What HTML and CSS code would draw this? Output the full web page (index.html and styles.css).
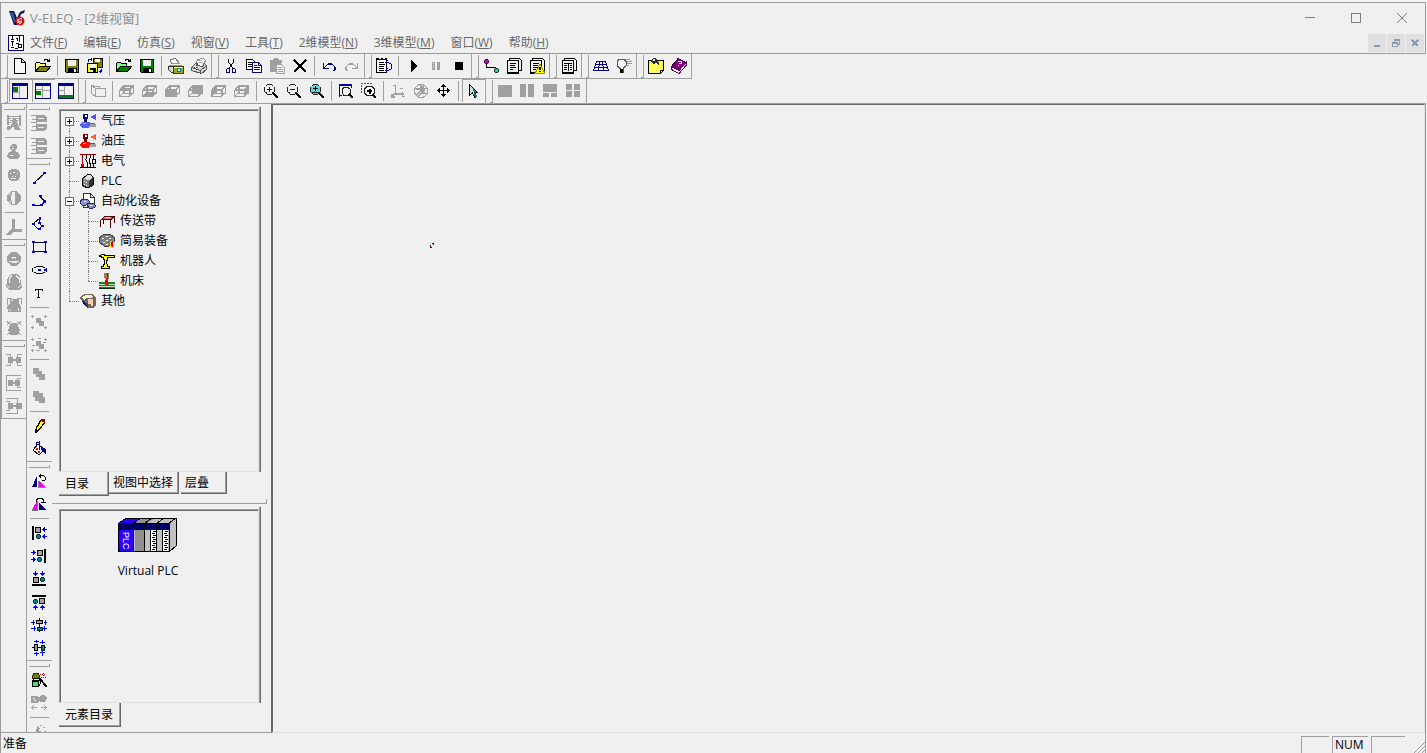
FILE: index.html
```html
<!DOCTYPE html>
<html lang="zh-CN">
<head>
<meta charset="utf-8">
<title>V-ELEQ - [2维视窗]</title>
<link rel="stylesheet" href="styles.css">
</head>
<body>
<svg class="defs" aria-hidden="true">
  <symbol id="logo" viewBox="0 0 16 16"><path d="M0 1h5l3 7 3-6 5-2-1 3-3 1-4 11H5z" fill="#101050"/><path d="M1 3l3-1 3 10H5z" fill="#315a9a"/><circle cx="11" cy="11" r="4.500" fill="#c81818"/><path d="M9 10l4-2M9 12l4-1M10 14l3-2M9 9v4" stroke="#fff" fill="none"/></symbol>
  <symbol id="doc" viewBox="0 0 16 16"><path d="M.5.5h15v15H.5z" fill="#fff" stroke="#000080"/><path d="M4.500 1v3M3 4.500h3M3 6.500h3M4.500 7v4M3 12.500h3M8 3.500h2M9.500 3v3M11.500 1v6M10 9.500h3v3h-3zM8 8.500h3M7 13.500h3" stroke="#000" fill="none"/></symbol>
  <symbol id="new" viewBox="0 0 16 16"><path d="M2.500.5h7l4 4v11h-11zM9.500.5v4h4" fill="#f8f8f8" stroke="#000"/></symbol>
  <symbol id="open" viewBox="0 0 16 16"><path d="M.5 13.500v-8l1-1h3l1 1h5v3" fill="#ffff70" stroke="#000"/><path d="M.5 13.500l4-5h11l-4 5z" fill="#808000" stroke="#000"/><path d="M9 2.500l1-1h2l2 2M14.500 1v3M12 3.500h3" fill="none" stroke="#000"/></symbol>
  <symbol id="openg" viewBox="0 0 16 16"><path d="M.5 13.500v-8l1-1h3l1 1h5v3" fill="#80ff80" stroke="#000"/><path d="M.5 13.500l4-5h11l-4 5z" fill="#008000" stroke="#000"/><path d="M9 2.500l1-1h2l2 2M14.500 1v3M12 3.500h3" fill="none" stroke="#000"/></symbol>
  <symbol id="save" viewBox="0 0 16 16"><path d="M1.500 1.500h13v13h-12l-1-1z" fill="#808000" stroke="#000"/><path d="M4 2h8v6H4z" fill="#f0f0f0"/><path d="M4 10h9v5H4z"/><path d="M10 11h2v3h-2z" fill="#f0f0f0"/></symbol>
  <symbol id="saveg" viewBox="0 0 16 16"><path d="M1.500 1.500h13v13h-12l-1-1z" fill="#008000" stroke="#000"/><path d="M4 2h8v6H4z" fill="#f0f0f0"/><path d="M4 10h9v5H4z"/><path d="M10 11h2v3h-2z" fill="#f0f0f0"/></symbol>
  <symbol id="saveall" viewBox="0 0 16 16"><path d="M6.500.5h9v9h-9z" fill="#808000" stroke="#000"/><path d="M8 1h5v3H8z" fill="#fff"/><path d="M.5 5.500h10v9H.5z" fill="#ffff00" stroke="#000"/><path d="M3 6h5v3H3zM4 12h2v2H4z" fill="#fff"/><path d="M3 10h6v4H6v-2H3z"/><path d="M1.500 4V1.500H5M4 0v3M14.500 11v2.500H12M13 12v3" stroke="#0000c0" fill="none"/></symbol>
  <symbol id="preview" viewBox="0 0 16 16"><path d="M3.500 6.500l-1-5 5-1 4 5" fill="#fff" stroke="#777"/><path d="M1 7.500h13M4 5.500h8" stroke="#00d0e0"/><path d="M.5 8.500h5v6h-2l-3-3z" fill="#dcdcdc" stroke="#333"/><path d="M5.500 8.500h10v7h-10z" fill="#a0a020" stroke="#404000"/><path d="M6 9.500h9" stroke="#ffff80"/><circle cx="11" cy="12" r="2" fill="#fff" stroke="#008080"/></symbol>
  <symbol id="print" viewBox="0 0 16 16"><path d="M4.500 7.500l2-6 6-1 2 2-3 6" fill="#fff" stroke="#888"/><path d="M.5 9.500l4-4h2l-1 2 6 1 2-3 2 2v4l-5 4-10-3z" fill="#d8d8d8" stroke="#555"/><path d="M.5 9.500l9 3 6-5M9.500 12.500v3" stroke="#555" fill="none"/><path d="M7 4.500h5M7 2.500h4" stroke="#b0b0b0"/><path d="M5 9h2v1H5z" fill="#00a000"/><path d="M3 9h1v1H3z" fill="#f00"/></symbol>
  <symbol id="cut" viewBox="0 0 16 16"><path d="M5.500 1v3l4 6M10.500 1v3l-4 6" stroke="#000" fill="none"/><path d="M4.500 10.500h2v4h-3v-3zM9.500 10.500h2l1 1v3h-3z" stroke="#000080" fill="none"/></symbol>
  <symbol id="copy" viewBox="0 0 16 16"><path d="M.5 1.500h6l3 3v7h-9z" fill="#fff" stroke="#000"/><path d="M2 4.500h4M2 6.500h4M2 8.500h4" stroke="#000"/><path d="M6.500 4.500h6l3 3v7h-9z" fill="#fff" stroke="#000080"/><path d="M12.500 4.500v3h3M8 7.500h3M8 9.500h6M8 11.500h6" stroke="#000080" fill="none"/></symbol>
  <symbol id="paste" viewBox="0 0 16 16"><path d="M1 2h3l1-2h4l1 2h3v3h-1v9H1z" fill="#a0a0a0"/><path d="M7.500 6.500h5l3 3v6h-8z" fill="#f0f0f0" stroke="#a0a0a0"/><path d="M9 9.500h4M9 11.500h5M9 13.500h5" stroke="#a0a0a0"/></symbol>
  <symbol id="del" viewBox="0 0 16 16"><path d="M2 2l12 12M14 2L2 14" stroke="#000" stroke-width="2.200"/></symbol>
  <symbol id="undo" viewBox="0 0 16 16"><path d="M2.500 5v5.500H8M3 10l4-4h4l3 3v3l-2 1" fill="none" stroke="#000080" stroke-width="1.300"/></symbol>
  <symbol id="redo" viewBox="0 0 16 16"><path d="M13.500 5v5.500H8M13 10L9 6H5L2 9v3l2 1" fill="none" stroke="#a0a0a0" stroke-width="1.300"/></symbol>
  <symbol id="rebuild" viewBox="0 0 16 16"><path d="M.5 1.500h10v13H.5z" fill="#fff" stroke="#000"/><path d="M0 .5h3M5 .5h2M9 .5h2M3 4.500h5M3 6.500h6M3 8.500h5M3 10.500h5M3 12.500h5" stroke="#000"/><path d="M9.500 4.500h3l3 2v4l-3 2h-3M11.500 2L9.500 4.500l2 2M11.500 10l-2 2.500 2 2" fill="none" stroke="#0000a0"/></symbol>
  <symbol id="play" viewBox="0 0 16 16"><path d="M6 2l7 6-7 6z"/></symbol>
  <symbol id="pause" viewBox="0 0 16 16"><path d="M4 4h3v8H4zM9 4h3v8H9z" fill="#a0a0a0"/><path d="M5.500 5v6" stroke="#f0f0f0" stroke-dasharray="1 1"/></symbol>
  <symbol id="stop" viewBox="0 0 16 16"><path d="M4 4h8v8H4z"/></symbol>
  <symbol id="wire" viewBox="0 0 16 16"><path d="M3.500 4v5.500h9v2" fill="none" stroke="#000"/><path d="M2 1h3v1h1v3H5v1H2V5H1V2h1z" fill="#500050"/><path d="M2 2h3v3H2z" fill="#c000c0"/><path d="M12 10h3v1h1v3h-1v1h-3v-1h-1v-3h1z" fill="#003838"/><path d="M12 11h3v3h-3z" fill="#00d8d8"/></symbol>
  <symbol id="list" viewBox="0 0 16 16"><path d="M3.500 2V.5h10l2 2v10H13" fill="none" stroke="#000"/><path d="M1.500 2.500h11v12h-11z" fill="#f0f0f0" stroke="#000"/><path d="M4 5.500h6M4 7.500h5M4 9.500h6M4 11.500h3M1 15.500h12" stroke="#000"/></symbol>
  <symbol id="warn" viewBox="0 0 16 16"><use href="#list"/><path d="M11 6l5 9.500H6z" fill="#ffff00" stroke="#a09000"/><path d="M10 9h2v3h-2zM10 13h2v1h-2z"/></symbol>
  <symbol id="table" viewBox="0 0 16 16"><path d="M3.500 2V.5h10l2 2v10H13" fill="none" stroke="#000"/><path d="M1.500 2.500h11v12h-11z" fill="#f0f0f0" stroke="#000"/><path d="M1 15.500h12M3 5.500h8M7.500 5v8M3 7.500h3M3 9.500h3M9 7.500h2M9 9.500h2M9 11.500h2M3 11.500h3" stroke="#000"/></symbol>
  <symbol id="grid" viewBox="0 0 16 16"><path d="M3.500 3.500h9l3 9H.5zM2.500 6.500h11M1.500 9.500h13M6.500 3.500l-1 9M9.500 3.500l1 9" fill="none" stroke="#000080"/></symbol>
  <symbol id="lamp" viewBox="0 0 16 16"><path d="M3 1.500h5l2 2v4l-3 3v4H4v-4l-3-3v-4z" fill="#f4f4f4" stroke="#555"/><path d="M4 11h3v4H4z"/><path d="M9 1.500h5M11 3.500h5M11 5.500h5M9 7.500h4" stroke="#00d0e0"/></symbol>
  <symbol id="note" viewBox="0 0 16 16"><path d="M.5 2.500h15v10l-3 3H.5z" fill="#ffff50" stroke="#000"/><path d="M2 5.500h12M2 7.500h12M2 9.500h12M2 11.500h12M2 13.500h10" stroke="#fff" stroke-dasharray="1 1"/><path d="M12.500 15v-2.500h3" fill="#f0f0f0" stroke="#000"/><path d="M4 1l2-1 3 1v2l2 2v2L8 5 5 6 3 3z" fill="#333"/><path d="M5 1h2v2H5z" fill="#ddd"/></symbol>
  <symbol id="book" viewBox="0 0 16 16"><path d="M7 .5l8 4-7 8-7.500-4z" fill="#800080" stroke="#300030"/><path d="M.5 8.500l7.500 4 7-8v3l-7 8-7.500-4z" fill="#fff" stroke="#600060"/><path d="M7 3.500h3v2H8M7 7v1" stroke="#ff0" fill="none"/></symbol>

  <symbol id="lay1" viewBox="0 0 16 16"><path d="M0 0h16v3H0z" fill="#000090"/><path d="M.5.5h15v15H.5z" fill="none" stroke="#000080"/><path d="M1 4h5v5H1z" fill="#008000"/><path d="M7.500 3v12M1 9.500h6" stroke="#a0a0a0"/></symbol>
  <symbol id="lay2" viewBox="0 0 16 16"><path d="M0 0h16v3H0z" fill="#000090"/><path d="M.5.5h15v15H.5z" fill="none" stroke="#000080"/><path d="M1 8h5v4H1z" fill="#008000"/><path d="M7.500 3v12M1 6.500h6M8 7.500h7" stroke="#a0a0a0"/></symbol>
  <symbol id="lay3" viewBox="0 0 16 16"><path d="M0 0h16v3H0z" fill="#000090"/><path d="M.5.5h15v15H.5z" fill="none" stroke="#000080"/><path d="M1 12h14v3H1z" fill="#008000"/><path d="M6.500 3v9M1 7.500h5" stroke="#a0a0a0"/></symbol>
  <symbol id="sheets" viewBox="0 0 16 16"><path d="M5.500 5.500h10v8h-10zM5.500 13.500l-4-3v-8h2l1 1h5v2M5.500 5.500l-4-3" fill="none" stroke="#a0a0a0"/></symbol>
  <symbol id="cube" viewBox="0 0 16 16"><path d="M.5 7.500h10v6H.5zM.5 7.500l4-5h10l-4 5M14.500 2.500v7l-4 4M4.500 3v7h10M.5 13.500l4-4" fill="none" stroke="#a0a0a0"/><path d="M1 6.500h10M5 3.500h9M11.500 7v6M5.500 3v7" fill="none" stroke="#a0a0a0"/></symbol>
  <symbol id="c1" viewBox="0 0 16 16"><use href="#cube"/><path d="M1 7l4-5h10l-4 5z" fill="#a0a0a0"/><path d="M6 4.500h5" stroke="#f0f0f0"/></symbol>
  <symbol id="c2" viewBox="0 0 16 16"><use href="#cube"/><path d="M0 14l5-5h10l-4 5z" fill="#a0a0a0"/></symbol>
  <symbol id="c3" viewBox="0 0 16 16"><use href="#cube"/><path d="M0 6h12v8H0z" fill="#a0a0a0"/></symbol>
  <symbol id="c4" viewBox="0 0 16 16"><use href="#cube"/><path d="M4 2h11v8H4z" fill="#a0a0a0"/></symbol>
  <symbol id="c5" viewBox="0 0 16 16"><use href="#cube"/><path d="M0 7l5-5v8l-5 4z" fill="#a0a0a0"/></symbol>
  <symbol id="c6" viewBox="0 0 16 16"><use href="#cube"/><path d="M10 7l5-5v8l-5 4z" fill="#a0a0a0"/></symbol>
  <symbol id="ring" viewBox="0 0 16 16"><path d="M4.500 1.500h4M2.500 3.500l2-2M8.500 1.500l2 2M1.500 4v5M11.500 4v5M2.500 9l2 2.500h4l2-2.500" fill="none" stroke="#222"/><path d="M10 10l5 5" stroke="#000" stroke-width="2"/></symbol>
  <symbol id="zin" viewBox="0 0 16 16"><use href="#ring"/><path d="M4 6.500h5M6.500 4v5" stroke="#600000"/></symbol>
  <symbol id="zout" viewBox="0 0 16 16"><use href="#ring"/><path d="M4 6.500h5" stroke="#600000"/></symbol>
  <symbol id="zpm" viewBox="0 0 16 16"><path d="M3 2h7l1 2v5l-2 2H4L2 9V4z" fill="#60d8d8"/><use href="#ring"/><path d="M4 5.500h5M6.500 3v5M4 9.500h5" stroke="#000"/></symbol>
  <symbol id="zfit" viewBox="0 0 16 16"><path d="M1.500 14V1.500h12V4M1 12.500h3M2 2.500h11M13.500 2v3" stroke="#0000a0" fill="none"/><path d="M6 4.500h4l2.500 2v3.500l-2.500 2.500H6L4.500 10V6z" fill="#f8f8f8" stroke="#222"/><path d="M11 11l4 4" stroke="#000" stroke-width="2"/></symbol>
  <symbol id="zwin" viewBox="0 0 16 16"><path d="M.5 10V.5h10" stroke="#555" stroke-dasharray="2 1" fill="none"/><path d="M6 3.500h5l2.500 2.500v4L11 12.500H6L3.500 10V6z" fill="#f8f8f8" stroke="#222"/><path d="M6 8h5M8.500 5.500v5" stroke="#000" stroke-width="2"/><path d="M12 12l3 3" stroke="#000" stroke-width="2"/></symbol>
  <symbol id="axes" viewBox="0 0 16 16"><path d="M5.500 2v9h8M5.500 10L2 14M3 2.500h3M12.500 9v5M10 5.500h3M2 11v3h3M12 13.500h3" stroke="#a0a0a0" fill="none" stroke-width="1.400"/></symbol>
  <symbol id="orbit" viewBox="0 0 16 16"><circle cx="8" cy="8" r="6.500" fill="none" stroke="#a0a0a0" stroke-width="1.300"/><path d="M8 2v6l5 3M8 8l-5 4M3 6h9l-7 8M10 3v8" stroke="#a0a0a0" fill="none" stroke-width="1.300"/></symbol>
  <symbol id="move" viewBox="0 0 16 16"><path d="M7.500 3v10M3 7.500h10" stroke="#000"/><path d="M7 1h1v1h1v1h1v1H5V3h1V2h1zM7 14h1v-1h1v-1h1v-1H5v1h1v1h1zM1 7v1h1v1h1v1h1V5H3v1H2v1zM14 7v1h-1v1h-1v1h-1V5h1v1h1v1z"/></symbol>
  <symbol id="arrow" viewBox="0 0 16 16"><path d="M4.500 1.500v11l3-3 2 5 2-1-2-4h3z" fill="#c8e0e0" stroke="#000"/><path d="M8 7l3 2M9 11l3 3" stroke="#008080" stroke-width="1.500"/></symbol>
  <symbol id="v1" viewBox="0 0 16 16"><path d="M1 2h14v12H1z" fill="#a0a0a0"/></symbol>
  <symbol id="v2" viewBox="0 0 16 16"><path d="M0 1h6v13H0zM8 1h6v13H8z" fill="#a0a0a0"/></symbol>
  <symbol id="v3" viewBox="0 0 16 16"><path d="M0 1h14v8H0zM0 10h6v4H0zM8 10h6v4H8z" fill="#a0a0a0"/></symbol>
  <symbol id="v4" viewBox="0 0 16 16"><path d="M0 1h6v6H0zM8 1h6v6H8zM0 8h6v6H0zM8 8h6v6H8z" fill="#a0a0a0"/></symbol>

  <symbol id="s1" viewBox="0 0 16 16"><path d="M2 0v10M14 0v11" stroke="#a0a0a0" stroke-width="2"/><path d="M1 1.500h14" stroke="#a0a0a0"/><path d="M3 3.500h10M4 5.500h8M3 7.500h9" stroke="#a0a0a0" stroke-dasharray="2 1"/><path d="M7 3h3l2 7 3 5H9l-2-4-3 4H1v-4h4z" fill="#a0a0a0"/></symbol>
  <symbol id="s2" viewBox="0 0 16 16"><path d="M6 0h3l2 2v2l-2 3 4 2 1 3-3 3H4l-3-2 1-4 4-2-2-3V2z" fill="#a0a0a0"/><path d="M6 2.500h1M6 4.500h2M4 11.500h3" stroke="#eee"/></symbol>
  <symbol id="s3" viewBox="0 0 16 16"><circle cx="8" cy="8" r="6.500" fill="#a0a0a0"/><path d="M4 6.500h1M7 5.500h2M11 6.500h1M6 9.500h1M9 9.500h1M5 11.500h5" stroke="#eee"/></symbol>
  <symbol id="s4" viewBox="0 0 16 16"><circle cx="8" cy="8" r="6.500" fill="none" stroke="#a0a0a0"/><path d="M9 2h2l4 4v4l-4 4H9zM6 2L2 6v4l4 4z" fill="#a0a0a0"/><path d="M7.500 3v10M5.500 5v6" stroke="#eee" fill="none"/></symbol>
  <symbol id="s5" viewBox="0 0 16 16"><path d="M6 0h3v10h7v3H8l-4 3H0v-1l6-5z" fill="#a0a0a0"/></symbol>
  <symbol id="s6" viewBox="0 0 16 16"><circle cx="8" cy="8" r="7" fill="#a0a0a0"/><path d="M6 6.500h4M6 7.500h1M9 7.500h1M3 10.500h10M6 11.500h5" stroke="#eee"/></symbol>
  <symbol id="s7" viewBox="0 0 16 16"><path d="M5 0h6l3 3 2 10-2 3H3l-3-3L2 3z" fill="#a0a0a0"/><path d="M6 1.500L3.500 4v5M10 1.500L13.500 5v4M1.500 11l2 3M14.500 11l-2 3" stroke="#eee" fill="none"/></symbol>
  <symbol id="s8" viewBox="0 0 16 16"><path d="M4 2h9v4l2 4v5H2L1 9l3-3z" fill="#a0a0a0"/><path d="M1.500 8V1.500H6M15.500 7V1.500H11" stroke="#a0a0a0" fill="none"/><path d="M5 3.500h2M3 12l2 2M13 11l-1 3" stroke="#eee"/></symbol>
  <symbol id="s9" viewBox="0 0 16 16"><path d="M5 3h6l3 7-2 5H4l-2-5z" fill="#a0a0a0"/><path d="M1 1l14 14M15 1L1 15M1 5l4-4M11 1l4 4M1 2h3M12 2h3" stroke="#a0a0a0"/></symbol>
  <symbol id="j1" viewBox="0 0 16 16"><path d="M0 2.500h4.500v11H0M16 2.500h-4.500v11H16" fill="none" stroke="#a0a0a0"/><path d="M2 5h5v6H2zM10 5h5v6h-5z" fill="#a0a0a0"/><path d="M7 8h3" stroke="#a0a0a0" stroke-width="2"/></symbol>
  <symbol id="j2" viewBox="0 0 16 16"><path d="M15 .5H.5v15H15M15 3.500h-3.500v9H15" fill="none" stroke="#a0a0a0"/><path d="M2 5h5v6H2zM9 5h5v6H9z" fill="#a0a0a0"/><path d="M6 8h4" stroke="#a0a0a0" stroke-width="2"/></symbol>
  <symbol id="j3" viewBox="0 0 16 16"><path d="M0 .5h11.500v15H0M0 3.500h3.500v9H0" fill="none" stroke="#a0a0a0"/><path d="M2 5h5v6H2zM10 5h6v6h-6z" fill="#a0a0a0"/><path d="M7 8h3" stroke="#a0a0a0" stroke-width="2"/></symbol>
  <symbol id="m1" viewBox="0 0 16 16"><path d="M0 .5h8M0 15.500h8M.5 4.500h4M0 7.500h5M.5 11.500h4M5.500 0v16" stroke="#a0a0a0" fill="none"/><path d="M6 0h7l3 3v4H6zM6 9h10v4l-3 3H6z" fill="#a0a0a0"/><path d="M7 3.500h6M7 12.500h6" stroke="#eee"/></symbol>
  <symbol id="line" viewBox="0 0 16 16"><path d="M3 13L14 3" stroke="#000"/><path d="M2 12h3v2H2zM12 2h3v2h-3z" fill="#00e"/></symbol>
  <symbol id="poly" viewBox="0 0 16 16"><path d="M2 12.500h8l4-4-5-5" stroke="#000" fill="none"/><path d="M1 11h3v2H1zM9 11h3v2H9zM12 7h3v3h-3zM8 2h3v2H8z" fill="#00e"/></symbol>
  <symbol id="polygon" viewBox="0 0 16 16"><path d="M9 2L2 8l6 6 3-4-3-3z" stroke="#000" fill="none"/><path d="M8 1h2v3H8zM1 7h3v2H1zM7 6h3v2H7zM10 9h3v2h-3zM7 12h3v2H7z" fill="#00e"/></symbol>
  <symbol id="rect" viewBox="0 0 16 16"><path d="M2.500 3.500h12v9h-12z" fill="none" stroke="#000"/><path d="M1 2h3v2H1zM13 2h3v2h-3zM1 12h3v2H1zM13 12h3v2h-3z" fill="#00e"/></symbol>
  <symbol id="ell" viewBox="0 0 16 16"><path d="M5 4.500h7M3 5.500h2M12 5.500h2M1.500 6v4M15 6v4M3 10.500h2M12 10.500h2M5 11.500h7" fill="none" stroke="#000"/><path d="M7 7h3v2H7zM13 7h3v2h-3z" fill="#00e"/></symbol>
  <symbol id="text" viewBox="0 0 16 16"><path d="M4 4h8v2h-1V5H8v7h1v1H6v-1h1V5H5v1H4z"/></symbol>
  <symbol id="grp" viewBox="0 0 16 16"><path d="M5 4h5v3h3v5H8V9H5z" fill="#a0a0a0"/><path d="M0 2.500h3M1.500 1v3M13 2.500h3M14.500 1v3M0 13.500h3M1.500 12v3M13 13.500h3M14.500 12v3" stroke="#a0a0a0"/></symbol>
  <symbol id="ungrp" viewBox="0 0 16 16"><path d="M5 4h5v3h3v5H8V9H5z" fill="#a0a0a0"/><path d="M0 2.500h3M1.500 1v3M13 2.500h3M14.500 1v3M0 13.500h3M1.500 12v3M13 13.500h3M14.500 12v3M7 1.500h3M12 5.500h3M1 8.500h3M5 13.500h4" stroke="#a0a0a0"/></symbol>
  <symbol id="front" viewBox="0 0 16 16"><path d="M2 2h6v3h3v3h3v6H8v-3H5V8H2z" fill="#a0a0a0"/></symbol>
  <symbol id="back" viewBox="0 0 16 16"><path d="M2 2h6v2h4v4h2v6H8v-2H4V8H2z" fill="#a0a0a0"/></symbol>
  <symbol id="pen" viewBox="0 0 16 16"><path d="M4.500 14.500l1-5 5-8h3v3l-5 7z" fill="#ff0" stroke="#000" stroke-width="1.300"/><path d="M10 1h4v4l-4-2z" fill="#900000"/><path d="M4 16v-5l3 1z"/></symbol>
  <symbol id="fill" viewBox="0 0 16 16"><path d="M2 9l5-6 6 6-5 5z" fill="#fff" stroke="#000"/><path d="M5.500 6V2l3-1v8" fill="none" stroke="#000080"/><path d="M10 5l5 3v5h-1l-4-5z" fill="#000080"/><path d="M5 7h2v2H5zM7 10h2v2H7z" fill="#f00"/></symbol>
  <symbol id="rot1" viewBox="0 0 16 16"><path d="M1 14L6 3v11z" fill="#000080"/><path d="M8 14V8l7 6z" fill="#f000f0"/><path d="M7.500 8v6.500H15" stroke="#888" fill="none"/><path d="M8 4l1-2h3l2 2v3l-3 1M9 1v4" fill="none" stroke="#000"/></symbol>
  <symbol id="rot2" viewBox="0 0 16 16"><path d="M1 14L6 5v9z" fill="#f000f0"/><path d="M1 14.500h5.500V5" stroke="#777" fill="none"/><path d="M8 14V7l8 7z" fill="#000080"/><path d="M5.500 6V4l2-2h3l2 2v3M10 6.500h5" fill="none" stroke="#000"/></symbol>
  <symbol id="al1" viewBox="0 0 16 16"><path d="M1 1h2v14H1z"/><path d="M4.500 2.500h5v5h-5z" fill="#a0a0a0" stroke="#000"/><path d="M5 10h1V9h3v1h1v3H9v1H6v-1H5z" fill="#002828"/><path d="M6 10h3v3H6z" fill="#008080"/><path d="M11 4.500h5M13.500 2v5M11 11.500h5M13.500 9v5M12.500 3v3M12.500 10v3" stroke="#00f" fill="none"/></symbol>
  <symbol id="al2" viewBox="0 0 16 16"><use href="#al1" transform="matrix(-1 0 0 1 16 0)"/></symbol>
  <symbol id="al3" viewBox="0 0 16 16"><use href="#al1" transform="rotate(-90 8 8)"/></symbol>
  <symbol id="al4" viewBox="0 0 16 16"><use href="#al1" transform="rotate(90 8 8)"/></symbol>
  <symbol id="al5" viewBox="0 0 16 16"><path d="M8.500 1v14" stroke="#000"/><path d="M5.500 3.500h6v3h-6z" fill="#a0a0a0" stroke="#000"/><path d="M6 10h5v3H6z" fill="#008080" stroke="#002020"/><path d="M0 5.500h4M2.500 3v5M16 5.500h-3M14.500 3v5M0 11.500h5M3.500 9v5M16 11.500h-4M13.500 9v5" stroke="#00f" fill="none"/></symbol>
  <symbol id="al6" viewBox="0 0 16 16"><use href="#al5" transform="rotate(-90 8 8)"/></symbol>
  <symbol id="wand" viewBox="0 0 16 16"><path d="M1 5l2-4h4l2 4-2 3H3z" fill="#708000" stroke="#303000"/><path d="M1.500 8.500l2-2h6l-2 2z" fill="#ff0" stroke="#000"/><path d="M1.500 9.500h6v5h-6z" fill="#40e060" stroke="#000"/><path d="M7.500 9.500l2-3v5l-2 3z" fill="#ff0" stroke="#000"/><path d="M8 6l8 9" stroke="#000" stroke-width="2"/><path d="M9 2.500h6M10 5.500h5M12.500 1v6" stroke="#e00000" stroke-dasharray="1 1"/></symbol>
  <symbol id="split" viewBox="0 0 16 16"><path d="M0 1h6l2 1 2-2h4l2 3-2 4h-4L8 6l-2 2H0z" fill="#a0a0a0"/><path d="M1 12.500h5M3 10l-2 2.500L3 15M10 12.500h5M13 10l2 2.500-2 2.500" stroke="#a0a0a0" fill="none"/><path d="M2 3.500h2M3 5.500h2" stroke="#eee"/></symbol>
  <symbol id="spray" viewBox="0 0 16 16"><path d="M6 2l3 2-1 3 4 1v6H7L5 8zM9 1h2v1H9zM12 3h2v1h-2zM13 7h2v1h-2z" fill="#a0a0a0"/></symbol>

  <symbol id="t-air" viewBox="0 0 16 16"><path d="M3 1h5v5H7v4H4V6H3z" fill="#101060"/><path d="M5 2h2v2H5z" fill="#fff"/><path d="M10 4l6-3v6z" fill="#5050ff"/><path d="M2 9h7l1 1h5v4H9l-1 1H3l-3-2v-2z" fill="#5060f0"/><path d="M10 11h6v3H9v-1h1z" fill="#a0a0a0"/><path d="M3 10h3v1H3z" fill="#b0b8ff"/></symbol>
  <symbol id="t-oil" viewBox="0 0 16 16"><path d="M3 1h5v5H7v4H4V6H3z" fill="#700000"/><path d="M5 2h2v2H5z" fill="#fff"/><path d="M10 4l6-3v6z" fill="#ff6020"/><path d="M2 9h7l1 1h5v4H9l-1 1H3l-3-2v-2z" fill="#ff1000"/><path d="M10 11h6v3H9v-1h1z" fill="#a0a0a0"/><path d="M3 10h3v1H3z" fill="#ffb0a0"/></symbol>
  <symbol id="t-elec" viewBox="0 0 16 16"><path d="M0 1.500h16" stroke="#900000"/><path d="M2.500 1v12" stroke="#b00000"/><path d="M0 14.500h16M6.500 2v4M5.500 6l2 4M7.500 10v4M13.500 2v4M13.500 11v3M10 5.500h-.5v5h1M10.500 2v3M10.500 11v3M12 6.500h3v4h-3z" stroke="#000" fill="none"/><path d="M1 11h3v3H1z" fill="#c00000"/></symbol>
  <symbol id="t-plc" viewBox="0 0 16 16"><path d="M2.500 5.500l4-3 2-1h2l3 3v7l-4 3h-3l-4-2z" fill="#808080" stroke="#000"/><path d="M3 6l5-4h2l3 2-4 3z" fill="#e0e0e0"/><path d="M9 8l4-4v7l-4 4z" fill="#303030"/><path d="M4 8.500h1M6 9.500h1M4 11.500h1M6 12.500h1" stroke="#fff"/></symbol>
  <symbol id="t-auto" viewBox="0 0 16 16"><path d="M3.500.5h7l4 4v10h-11z" fill="#fff" stroke="#333"/><path d="M10.500.5v4h4" fill="none" stroke="#333"/><path d="M0 8l3-2h4l2 2v2l-3 2H2l-2-2z" fill="#8890d0" stroke="#283050"/><path d="M7 12l2-2h4l2 2v2l-2 1H9z" fill="#8890c0" stroke="#283050"/><path d="M4 8.500h2M10 12.500h2" stroke="#fff"/></symbol>
  <symbol id="t-belt" viewBox="0 0 16 16"><path d="M1 7l4-4h11l-3 4z" fill="#500000"/><path d="M5 4h8l-2 2H3z" fill="#e07070"/><path d="M1.500 7v7M11.500 7v8M15.500 4v6M4.500 7v4" stroke="#500000"/><path d="M7 4.500h4" stroke="#fff"/></symbol>
  <symbol id="t-dev" viewBox="0 0 16 16"><path d="M2 3l4-2h5l4 3v5l-5 4H5L0 9V6z" fill="#808080" stroke="#444"/><path d="M3 5.500h2M7 3.500h2M10 5.500h2M4 9.500h2M7 7.500h2M7 11.500h2" stroke="#fff"/><path d="M11 8h4v7h-3l-1-2z" fill="#e8d000"/><path d="M12 9l2 5M14 8l-2 5" stroke="#d00000"/></symbol>
  <symbol id="t-robot" viewBox="0 0 16 16"><path d="M0 2h2V1h4v1h10v3H9v3H8v3h1v2h2v3H2v-3h2v-2h1V7H4V5H2V4H0z"/><path d="M2 3V2h3v1h10v1H8v3H7v4h1v3h2v1H3v-1h2v-2h1V6H5V4H3V3z" fill="#ff0"/></symbol>
  <symbol id="t-mach" viewBox="0 0 16 16"><path d="M5 0h5v5L9 7H7L5 5z" fill="#908050"/><path d="M8 0h1v4H8z" fill="#403010"/><path d="M0 9h16v7H0z" fill="#208028"/><path d="M0 11.500h6M10 11.500h6M0 13.500h16" stroke="#c0e0c0"/><path d="M0 15.500h16" stroke="#103010"/><path d="M7 5h2v5H8v2H7v-2H6V7h1z" fill="#f00000"/></symbol>
  <symbol id="t-other" viewBox="0 0 16 16"><path d="M1 3l4-2h7l4 3v8l-3 3H7L4 9 0 6z" fill="#706858"/><path d="M2 4l4-2h5l2 2-3 1H7L4 7z" fill="#fff0e0"/><path d="M8 6h5v7h-2v-2H8z" fill="#f4d0a8"/><path d="M3 8l3 5" stroke="#0000b0" stroke-width="2"/><path d="M7.500 10v5" stroke="#c00000"/></symbol>
</svg>

<div class="window">
  <header class="titlebar">
    <svg class="icon smooth"><use href="#logo"/></svg>
    <h1 class="title">V-ELEQ - [2维视窗]</h1>
    <div class="caption">
      <button class="cap" aria-label="最小化"><svg viewBox="0 0 10 10"><path d="M0 4.500h10"/></svg></button>
      <button class="cap" aria-label="最大化"><svg viewBox="0 0 10 10"><path d="M.5.5h9v9h-9z"/></svg></button>
      <button class="cap smooth" aria-label="关闭"><svg viewBox="0 0 10 10"><path d="M0 0l10 10M10 0L0 10"/></svg></button>
    </div>
  </header>
  <nav class="menubar">
    <svg class="icon"><use href="#doc"/></svg>
    <button class="menu">文件(<u>F</u>)</button>
    <button class="menu">编辑(<u>E</u>)</button>
    <button class="menu">仿真(<u>S</u>)</button>
    <button class="menu">视窗(<u>V</u>)</button>
    <button class="menu">工具(<u>T</u>)</button>
    <button class="menu">2维模型(<u>N</u>)</button>
    <button class="menu">3维模型(<u>M</u>)</button>
    <button class="menu">窗口(<u>W</u>)</button>
    <button class="menu">帮助(<u>H</u>)</button>
    <div class="mdi-buttons">
      <button class="mdi" aria-label="最小化子窗口"><svg viewBox="0 0 8 8"><path d="M1 7h6"/></svg></button>
      <button class="mdi" aria-label="还原子窗口"><svg viewBox="0 0 8 8"><path class="thin" d="M2.500 3V1h5v4H6M.5 4h5v3.500h-5zM2 .5h6M0 3.500h6"/></svg></button>
      <button class="mdi" aria-label="关闭子窗口"><svg viewBox="0 0 8 8"><path d="M1 1l6 6M7 1L1 7"/></svg></button>
    </div>
  </nav>

  <div class="bar-row underlined">
    <div class="bar"><i class="grip"></i>
      <button class="tool" aria-label="新建"><svg><use href="#new"/></svg></button>
      <button class="tool" aria-label="打开"><svg><use href="#open"/></svg></button><i class="sep"></i>
      <button class="tool" aria-label="保存"><svg><use href="#save"/></svg></button>
      <button class="tool" aria-label="全部保存"><svg><use href="#saveall"/></svg></button><i class="sep"></i>
      <button class="tool" aria-label="打开模型"><svg><use href="#openg"/></svg></button>
      <button class="tool" aria-label="保存模型"><svg><use href="#saveg"/></svg></button><i class="sep"></i>
      <button class="tool" aria-label="打印预览"><svg><use href="#preview"/></svg></button>
      <button class="tool" aria-label="打印"><svg><use href="#print"/></svg></button>
    </div>
    <div class="bar"><i class="grip"></i>
      <button class="tool" aria-label="剪切"><svg><use href="#cut"/></svg></button>
      <button class="tool" aria-label="复制"><svg><use href="#copy"/></svg></button>
      <button class="tool" aria-label="粘贴" disabled><svg><use href="#paste"/></svg></button>
      <button class="tool" aria-label="删除"><svg><use href="#del"/></svg></button><i class="sep"></i>
      <button class="tool" aria-label="撤销"><svg><use href="#undo"/></svg></button>
      <button class="tool" aria-label="重做" disabled><svg><use href="#redo"/></svg></button>
    </div>
    <div class="bar"><i class="grip"></i>
      <button class="tool" aria-label="重建"><svg><use href="#rebuild"/></svg></button><i class="sep"></i>
      <button class="tool" aria-label="开始"><svg><use href="#play"/></svg></button>
      <button class="tool" aria-label="暂停" disabled><svg><use href="#pause"/></svg></button>
      <button class="tool" aria-label="停止"><svg><use href="#stop"/></svg></button>
    </div>
    <div class="bar"><i class="grip"></i>
      <button class="tool" aria-label="连接"><svg><use href="#wire"/></svg></button>
      <button class="tool" aria-label="列表"><svg><use href="#list"/></svg></button>
      <button class="tool" aria-label="错误列表"><svg><use href="#warn"/></svg></button>
    </div>
    <div class="bar"><i class="grip"></i>
      <button class="tool" aria-label="表格"><svg><use href="#table"/></svg></button>
    </div>
    <div class="bar"><i class="grip"></i>
      <button class="tool" aria-label="网格"><svg><use href="#grid"/></svg></button>
      <button class="tool" aria-label="灯光"><svg><use href="#lamp"/></svg></button>
    </div>
    <div class="bar"><i class="grip"></i>
      <button class="tool" aria-label="备注"><svg><use href="#note"/></svg></button>
      <button class="tool" aria-label="帮助手册"><svg><use href="#book"/></svg></button>
    </div>
  </div>

  <div class="bar-row">
    <div class="bar"><i class="grip"></i>
      <button class="tool pressed" aria-label="目录窗格"><svg><use href="#lay1"/></svg></button>
      <button class="tool pressed" aria-label="元素窗格"><svg><use href="#lay2"/></svg></button>
      <button class="tool" aria-label="输出窗格"><svg><use href="#lay3"/></svg></button>
    </div>
    <div class="bar"><i class="grip"></i>
      <button class="tool" aria-label="图页" disabled><svg><use href="#sheets"/></svg></button><i class="sep"></i>
      <button class="tool" aria-label="顶视图" disabled><svg><use href="#c1"/></svg></button>
      <button class="tool" aria-label="底视图" disabled><svg><use href="#c2"/></svg></button>
      <button class="tool" aria-label="前视图" disabled><svg><use href="#c3"/></svg></button>
      <button class="tool" aria-label="后视图" disabled><svg><use href="#c4"/></svg></button>
      <button class="tool" aria-label="左视图" disabled><svg><use href="#c5"/></svg></button>
      <button class="tool" aria-label="右视图" disabled><svg><use href="#c6"/></svg></button><i class="sep"></i>
      <button class="tool" aria-label="放大"><svg><use href="#zin"/></svg></button>
      <button class="tool" aria-label="缩小"><svg><use href="#zout"/></svg></button>
      <button class="tool" aria-label="缩放"><svg><use href="#zpm"/></svg></button><i class="sep"></i>
      <button class="tool" aria-label="全部显示"><svg><use href="#zfit"/></svg></button>
      <button class="tool" aria-label="窗口缩放"><svg><use href="#zwin"/></svg></button><i class="sep"></i>
      <button class="tool" aria-label="坐标轴" disabled><svg><use href="#axes"/></svg></button>
      <button class="tool" aria-label="旋转视图" disabled><svg><use href="#orbit"/></svg></button>
      <button class="tool" aria-label="平移"><svg><use href="#move"/></svg></button><i class="sep"></i>
      <button class="tool pressed" aria-label="选择"><svg><use href="#arrow"/></svg></button>
    </div>
    <div class="bar"><i class="grip"></i>
      <button class="tool" aria-label="单视图" disabled><svg><use href="#v1"/></svg></button>
      <button class="tool" aria-label="双视图" disabled><svg><use href="#v2"/></svg></button>
      <button class="tool" aria-label="三视图" disabled><svg><use href="#v3"/></svg></button>
      <button class="tool" aria-label="四视图" disabled><svg><use href="#v4"/></svg></button>
    </div>
  </div>

  <main class="body">
    <div class="dock dock-first">
      <div class="vbar"><i class="vgrip"></i>
        <button class="tool" aria-label="形状" disabled><svg><use href="#s1"/></svg></button><i class="vsep"></i>
        <button class="tool" aria-label="操纵杆" disabled><svg><use href="#s2"/></svg></button>
        <button class="tool" aria-label="材质" disabled><svg><use href="#s3"/></svg></button>
        <button class="tool" aria-label="明暗" disabled><svg><use href="#s4"/></svg></button><i class="vsep"></i>
        <button class="tool" aria-label="原点" disabled><svg><use href="#s5"/></svg></button>
      </div>
      <div class="vbar"><i class="vgrip"></i>
        <button class="tool" aria-label="球体" disabled><svg><use href="#s6"/></svg></button>
        <button class="tool" aria-label="旋转体" disabled><svg><use href="#s7"/></svg></button>
        <button class="tool" aria-label="移动体" disabled><svg><use href="#s8"/></svg></button>
        <button class="tool" aria-label="缩放体" disabled><svg><use href="#s9"/></svg></button>
      </div>
      <div class="vbar"><i class="vgrip"></i>
        <button class="tool" aria-label="接合一" disabled><svg><use href="#j1"/></svg></button>
        <button class="tool" aria-label="接合二" disabled><svg><use href="#j2"/></svg></button>
        <button class="tool" aria-label="接合三" disabled><svg><use href="#j3"/></svg></button>
      </div>
    </div>
    <div class="dock dock-second">
      <div class="vbar"><i class="vgrip"></i>
        <button class="tool" aria-label="模块一" disabled><svg><use href="#m1"/></svg></button>
        <button class="tool" aria-label="模块二" disabled><svg><use href="#m1"/></svg></button>
      </div>
      <div class="vbar"><i class="vgrip"></i>
        <button class="tool" aria-label="直线"><svg><use href="#line"/></svg></button>
        <button class="tool" aria-label="折线"><svg><use href="#poly"/></svg></button>
        <button class="tool" aria-label="多边形"><svg><use href="#polygon"/></svg></button>
        <button class="tool" aria-label="矩形"><svg><use href="#rect"/></svg></button>
        <button class="tool" aria-label="椭圆"><svg><use href="#ell"/></svg></button>
        <button class="tool" aria-label="文本"><svg><use href="#text"/></svg></button><i class="vsep"></i>
        <button class="tool" aria-label="组合" disabled><svg><use href="#grp"/></svg></button>
        <button class="tool" aria-label="取消组合" disabled><svg><use href="#ungrp"/></svg></button><i class="vsep"></i>
        <button class="tool" aria-label="置前" disabled><svg><use href="#front"/></svg></button>
        <button class="tool" aria-label="置后" disabled><svg><use href="#back"/></svg></button><i class="vsep"></i>
        <button class="tool" aria-label="线条颜色"><svg><use href="#pen"/></svg></button>
        <button class="tool" aria-label="填充颜色"><svg><use href="#fill"/></svg></button>
      </div>
      <div class="vbar"><i class="vgrip"></i>
        <button class="tool" aria-label="右转"><svg><use href="#rot1"/></svg></button>
        <button class="tool" aria-label="左转"><svg><use href="#rot2"/></svg></button><i class="vsep"></i>
        <button class="tool" aria-label="左对齐"><svg><use href="#al1"/></svg></button>
        <button class="tool" aria-label="右对齐"><svg><use href="#al2"/></svg></button>
        <button class="tool" aria-label="底对齐"><svg><use href="#al3"/></svg></button>
        <button class="tool" aria-label="顶对齐"><svg><use href="#al4"/></svg></button>
        <button class="tool" aria-label="垂直居中"><svg><use href="#al5"/></svg></button>
        <button class="tool" aria-label="水平居中"><svg><use href="#al6"/></svg></button>
      </div>
      <div class="vbar"><i class="vgrip"></i>
        <button class="tool" aria-label="向导"><svg><use href="#wand"/></svg></button>
        <button class="tool" aria-label="拆分" disabled><svg><use href="#split"/></svg></button><i class="vsep"></i>
        <button class="tool" aria-label="喷涂" disabled><svg><use href="#spray"/></svg></button>
      </div>
    </div>

    <aside class="side">
      <section class="panel panel-tree">
        <div class="frame"><div class="well">
          <ul class="tree">
            <li><div class="node"><button class="exp plus" aria-label="展开气压"></button><svg><use href="#t-air"/></svg><span>气压</span></div></li>
            <li><div class="node"><button class="exp plus" aria-label="展开油压"></button><svg><use href="#t-oil"/></svg><span>油压</span></div></li>
            <li><div class="node"><button class="exp plus" aria-label="展开电气"></button><svg><use href="#t-elec"/></svg><span>电气</span></div></li>
            <li><div class="node leaf"><svg><use href="#t-plc"/></svg><span>PLC</span></div></li>
            <li><div class="node"><button class="exp" aria-label="折叠自动化设备"></button><svg><use href="#t-auto"/></svg><span>自动化设备</span></div>
              <ul class="tree sub">
                <li><div class="node leaf"><svg><use href="#t-belt"/></svg><span>传送带</span></div></li>
                <li><div class="node leaf"><svg><use href="#t-dev"/></svg><span>简易装备</span></div></li>
                <li><div class="node leaf"><svg><use href="#t-robot"/></svg><span>机器人</span></div></li>
                <li><div class="node leaf"><svg><use href="#t-mach"/></svg><span>机床</span></div></li>
              </ul>
            </li>
            <li><div class="node leaf"><svg><use href="#t-other"/></svg><span>其他</span></div></li>
          </ul>
        </div></div>
        <div class="tabs">
          <button class="tab active">目录</button>
          <button class="tab">视图中选择</button>
          <button class="tab wide">层叠</button>
        </div>
      </section>
      <div class="splitter"></div>
      <section class="panel panel-elements">
        <div class="frame"><div class="well">
          <figure class="element">
            <svg class="plc" viewBox="0 0 60 34">
              <path d="M.5 5.500l7-5h51v27l-7 6H.5z" fill="#c0c0c0" stroke="#000"/>
              <path d="M1 5l7-4h15l-7 4z" fill="#3000ff"/><path d="M17 5l7-4h12l-7 4z" fill="#909090"/>
              <path d="M1 6h50v6H1z" fill="#000068"/><path d="M1 12h15v21H1z" fill="#3000ff"/>
              <path d="M17 12h10v21H17z" fill="#909090"/>
              <path d="M33 12h5v21h-5zM45 12h5v21h-5z" fill="#fff"/>
              <path d="M0 5.500h51M1 11.500h50M15.500 5v28M26.500 5v28M38.500 5v28M51 5v28M32.500 12v21M44.500 12v21M16 5l7-5M27 5l7-5M39 5l7-5M51 5l7-5" fill="none" stroke="#000"/>
              <path d="M36.500 13v20M48.500 13v20" stroke="#000" stroke-width="3" stroke-dasharray="1 3"/>
              <path d="M35.500 15v18M47.500 15v18" stroke="#000" stroke-width="3" stroke-dasharray="1 3"/>
              <text class="plc-label" transform="translate(5 14) rotate(90)">PLC</text>
            </svg>
            <figcaption>Virtual PLC</figcaption>
          </figure>
        </div></div>
        <div class="tabs">
          <button class="tab lone">元素目录</button>
        </div>
      </section>
    </aside>

    <section class="canvas" aria-label="2维视窗">
      <svg class="mark" viewBox="0 0 4 5"><path d="M2 .5h2M3.500 0v2M.5 2v3M0 4.500h2" stroke="#600" fill="none"/></svg>
    </section>
  </main>

  <footer class="status">
    <span class="message">准备</span>
    <span class="pane pane-a"></span>
    <span class="pane pane-b">NUM</span>
    <span class="pane pane-c"></span>
    <svg class="sizer" viewBox="0 0 12 12"><path d="M1 12L12 1M5 12l7-7M9 12l3-3"/></svg>
  </footer>
</div>
</body>
</html>
```

FILE: styles.css
```css
* { box-sizing: border-box; }

body {
  margin: 0;
  background: #f0f0f0;
  color: #000;
  font: 12px/16px "Open Sans", "Noto Sans CJK SC", sans-serif;
}

button {
  margin: 0;
  padding: 0;
  border: 0;
  background: none;
  color: inherit;
  font: inherit;
}

svg { display: block; flex: none; shape-rendering: crispEdges; }
.smooth, .smooth svg { shape-rendering: auto; }
.defs { position: absolute; width: 0; height: 0; }
.icon { width: 16px; height: 16px; }

.window {
  display: flex;
  flex-direction: column;
  height: 100vh;
  border-top: 2px solid #f4f4f4;
  border-right: 1px solid #f0f0f0;
}

.titlebar {
  display: flex;
  align-items: center;
  flex: none;
  height: 31px;
  padding-left: 8px;
  border: 1px solid #9a9a9a;
  border-bottom: 0;
}
.title {
  flex: 1;
  margin: 0 0 0 5px;
  color: #8e8e8e;
  font-size: 13px;
  font-weight: 400;
}
.caption { display: flex; }
.cap {
  display: grid;
  place-items: center;
  width: 46px;
  height: 28px;
}
.cap svg { width: 10px; height: 10px; fill: none; stroke: #808080; }

.menubar {
  display: flex;
  align-items: center;
  flex: none;
  height: 21px;
  padding-left: 7px;
  border: 1px solid #9a9a9a;
  border-top: 0;
}
.menu { height: 18px; padding: 0 8px; color: #686868; white-space: nowrap; }
.menubar .icon + .menu { padding-left: 6px; }
.mdi-buttons { display: flex; gap: 1px; margin-left: auto; padding-right: 1px; }
.mdi {
  display: grid;
  place-items: center;
  width: 18px;
  height: 18px;
  background: #e0e0e0;
}
.mdi svg { width: 8px; height: 8px; fill: none; stroke: #8a9bb0; stroke-width: 2; }
.mdi .thin { stroke-width: 1; }

.bar-row {
  display: flex;
  align-self: flex-start;
  flex: none;
  height: 24px;
  padding-left: 1px;
  box-shadow: inset 1px 0 #9a9a9a;
}
.underlined { height: 25px; border-bottom: 1px solid #a0a0a0; }
.bar { display: flex; border-right: 1px solid #a0a0a0; }
.grip {
  width: 3px;
  margin: 1px 1px 0 4px;
  background: linear-gradient(#a0a0a0, #a0a0a0) left bottom / 3px 1px no-repeat;
  border-right: 1px solid #a0a0a0;
}
.sep { width: 1px; margin: 2px 3px 2px 2px; background: #a0a0a0; }
.tool {
  display: flex;
  align-items: flex-start;
  flex: none;
  width: 23px;
  height: 23px;
  padding: 4px 0 0 3px;
}
.tool svg { width: 16px; height: 16px; }
.pressed { box-shadow: inset 1px 1px #a0a0a0, inset -1px -1px #fafafa; }

.body {
  display: flex;
  flex: 1;
  min-height: 0;
  border-top: 1px solid #a0a0a0;
  border-right: 1px solid #9a9a9a;
}
.dock {
  display: flex;
  flex-direction: column;
  flex: none;
  overflow: hidden;
  border-bottom: 1px solid #a0a0a0;
}
.dock .tool { padding-top: 3px; }
.dock-first { width: 26px; border-left: 1px solid #9a9a9a; }
.dock-second { width: 26px; border-left: 1px solid #a0a0a0; }
.vbar {
  display: flex;
  flex-direction: column;
  flex: none;
  align-items: flex-start;
  padding-left: 1px;
  border-bottom: 1px solid #a0a0a0;
}
.dock-first .vbar { border-left: 1px solid #a0a0a0; }
.dock-second .vbar:last-child { border-bottom: 0; }
.vgrip {
  width: 21px;
  height: 3px;
  margin: 3px 0 2px 1px;
  border-right: 1px solid #a0a0a0;
  border-bottom: 1px solid #a0a0a0;
}
.vsep { width: 19px; height: 1px; margin: 2px 0 3px 2px; background: #a0a0a0; }

.side {
  display: flex;
  flex-direction: column;
  flex: none;
  width: 219px;
  padding-top: 3px;
  border-bottom: 1px solid #a0a0a0;
}
.panel { display: flex; flex-direction: column; flex: none; padding: 0 10px 0 7px; }
.panel-tree { flex: 1; min-height: 0; }
.panel-elements { height: 225px; padding-bottom: 4px; }
.frame {
  display: flex;
  flex: 1;
  min-height: 0;
  padding: 2px 1px 0 0;
  border-right: 1px solid #696969;
  box-shadow: inset -1px 0 #a0a0a0;
}
.well {
  flex: 1;
  padding: 1px 0 0 1px;
  overflow: hidden;
  border: 1px solid #a0a0a0;
  border-right-color: #e0e0e0;
  border-bottom-color: #e0e0e0;
  box-shadow: inset 1px 1px #696969;
}
.tabs { display: flex; align-items: flex-start; flex: none; height: 25px; }
.tab {
  height: 22px;
  padding: 0 5px 0 4px;
  border-right: 1px solid #696969;
  border-bottom: 1px solid #696969;
  box-shadow: inset -1px -1px #a0a0a0;
  white-space: nowrap;
}
.tab.active { height: 24px; padding: 0 19px 0 6px; }
.tab.wide { padding-right: 17px; margin-left: 2px; }
.tab.lone { height: 24px; padding: 0 7px 0 6px; }
.splitter {
  flex: none;
  height: 5px;
  margin: 2px 4px 3px 0;
  border-right: 1px solid #a0a0a0;
  border-bottom: 1px solid #a0a0a0;
}

.tree { margin: 0; padding: 0; list-style: none; }
.sub { margin-left: 19px; }
.tree li { position: relative; }
.tree li::before {
  content: "";
  position: absolute;
  left: 8px;
  top: 0;
  bottom: 0;
  border-left: 1px dotted #808080;
}
.tree li:last-child::before { bottom: auto; height: 10px; }
.tree > li:first-child::before { top: 10px; }
.sub > li:first-child::before { top: 0; }
.node { display: flex; align-items: center; height: 20px; padding-left: 4px; position: relative; }
.node::before {
  content: "";
  position: absolute;
  left: 8px;
  top: 10px;
  width: 10px;
  border-top: 1px dotted #808080;
}
.node svg { width: 16px; height: 16px; margin-right: 5px; }
.node.leaf { padding-left: 19px; }
.exp {
  position: relative;
  width: 9px;
  height: 9px;
  margin-right: 6px;
  border: 1px solid #707070;
  background: linear-gradient(#000, #000) center / 5px 1px no-repeat #f8f8f8;
}
.plus {
  background: linear-gradient(#000, #000) center / 5px 1px no-repeat,
    linear-gradient(#000, #000) center / 1px 5px no-repeat #f8f8f8;
}

.element {
  display: flex;
  flex-direction: column;
  align-items: center;
  gap: 11px;
  width: 110px;
  margin: 7px 32px;
}
.plc { width: 60px; height: 34px; }
.plc-label { fill: #fff; font: 9px "Liberation Sans", sans-serif; }

.canvas {
  position: relative;
  flex: 1;
  min-width: 0;
  border: 1px solid #696969;
  border-left-width: 2px;
  border-right-color: #e0e0e0;
  border-bottom-color: #e0e0e0;
}
.mark { position: absolute; left: 157px; top: 138px; width: 4px; height: 5px; }

.status {
  display: flex;
  align-items: flex-end;
  flex: none;
  height: 20px;
  padding-left: 2px;
  border-left: 1px solid #9a9a9a;
  border-right: 1px solid #9a9a9a;
}
.message { flex: 1; line-height: 18px; }
.pane {
  height: 17px;
  margin-right: 3px;
  border-top: 1px solid #a0a0a0;
  border-left: 1px solid #a0a0a0;
}
.pane-a { width: 28px; }
.pane-b { width: 36px; padding-left: 2px; }
.pane-c { width: 34px; margin-right: 8px; }
.sizer { width: 12px; height: 12px; stroke: #a0a0a0; fill: none; shape-rendering: auto; }
```
